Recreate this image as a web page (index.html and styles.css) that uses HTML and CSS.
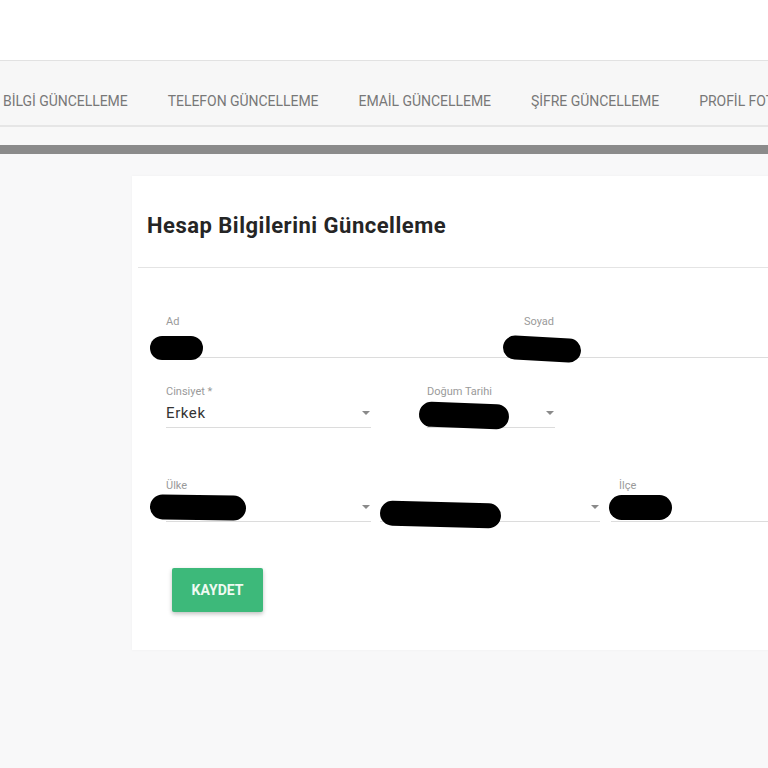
FILE: index.html
```html
<!DOCTYPE html>
<html lang="tr">
<head>
<meta charset="utf-8">
<title>Hesap Bilgilerini Güncelleme</title>
<link rel="stylesheet" href="styles.css">
</head>
<body>
<header class="topbar"></header>
<nav class="tabs">
  <div class="tabs-row">
    <a class="tab">BİLGİ GÜNCELLEME</a>
    <a class="tab">TELEFON GÜNCELLEME</a>
    <a class="tab">EMAİL GÜNCELLEME</a>
    <a class="tab">ŞİFRE GÜNCELLEME</a>
    <a class="tab">PROFİL FOTOĞRAFI</a>
  </div>
</nav>
<div class="strip"></div>
<div class="progress"></div>
<main class="main">
  <section class="card">
    <div class="card-head">
      <h1 class="card-title">Hesap Bilgilerini Güncelleme</h1>
    </div>
    <div class="divider"></div>
    <form class="form">
      <div class="row row-1">
        <div class="field w-half">
          <label class="label">Ad</label>
          <div class="control"><span class="redact r-ad"></span></div>
        </div>
        <div class="field w-half">
          <label class="label">Soyad</label>
          <div class="control"><span class="redact r-soyad"></span></div>
        </div>
      </div>
      <div class="row row-2">
        <div class="field w-select">
          <label class="label">Cinsiyet *</label>
          <div class="control"><span class="value">Erkek</span><span class="caret"></span></div>
        </div>
        <div class="field w-date">
          <label class="label">Doğum Tarihi</label>
          <div class="control"><span class="redact r-dogum"></span><span class="caret"></span></div>
        </div>
      </div>
      <div class="row row-3">
        <div class="field w-select">
          <label class="label">Ülke</label>
          <div class="control"><span class="redact r-ulke"></span><span class="caret"></span></div>
        </div>
        <div class="field w-il">
          <label class="label">&nbsp;</label>
          <div class="control"><span class="redact r-il"></span><span class="caret"></span></div>
        </div>
        <div class="field w-ilce">
          <label class="label label-ilce">İlçe</label>
          <div class="control"><span class="redact r-ilce"></span></div>
        </div>
      </div>
      <div class="actions">
        <button type="button" class="btn">KAYDET</button>
      </div>
    </form>
  </section>
</main>
</body>
</html>
```

FILE: styles.css
```css
html, body {
  margin: 0;
  padding: 0;
}
body {
  background: #f8f8f9;
  font-family: Roboto, "Noto Sans", sans-serif;
  overflow: hidden;
  width: 768px;
  height: 768px;
}
.topbar {
  height: 60px;
  background: #ffffff;
  border-bottom: 1px solid #e2e2e2;
}
.tabs {
  height: 64px;
  background: #f7f7f7;
  border-bottom: 2px solid #e6e6e6;
  overflow: hidden;
}
.tabs-row {
  display: flex;
  height: 100%;
  align-items: center;
  padding-top: 15px;
  box-sizing: border-box;
  margin-left: -17px;
  white-space: nowrap;
}
.tab {
  padding: 0 20px;
  font-size: 14px;
  color: #787878;
  letter-spacing: -0.04px;
  flex: none;
}
.strip {
  height: 18px;
  background: #f8f8f8;
}
.progress {
  height: 9px;
  background: #8b8b8b;
}
.main {
  padding: 22px 0 0 132px;
}
.card {
  width: 1000px;
  height: 474px;
  background: #ffffff;
  box-shadow: 0 0 3px rgba(0,0,0,0.04);
}
.card-head {
  padding: 35px 15px 27px;
}
.card-title {
  margin: 0;
  font-size: 22px;
  line-height: 29px;
  font-weight: 700;
  color: #252525;
  letter-spacing: 0.5px;
}
.divider {
  margin-left: 6px;
  height: 1px;
  background: #e4e4e4;
}
.form {
  padding: 47px 0 0 34px;
}
.row {
  display: flex;
}
.row-1 {
  gap: 16px;
}
.row-2 {
  margin-top: 27px;
  gap: 56px;
}
.row-3 {
  margin-top: 51px;
}
.field {
  display: flex;
  flex-direction: column;
}
.w-half { width: 342px; }
.w-select { width: 205px; }
.w-date { width: 128px; }
.w-il { width: 220px; margin-left: 9px; }
.w-ilce { width: 200px; margin-left: 11px; }
.label {
  font-size: 11px;
  line-height: 14px;
  color: #9a9a9a;
  height: 14px;
}
.label-ilce {
  padding-left: 8px;
}
.control {
  height: 28px;
  border-bottom: 1px solid #dcdcdc;
  display: flex;
  align-items: center;
  justify-content: space-between;
}
.value {
  font-size: 15px;
  color: #333;
  letter-spacing: 0.6px;
}
.caret {
  width: 0;
  height: 0;
  border-left: 4px solid transparent;
  border-right: 4px solid transparent;
  border-top: 4px solid #8a8a8a;
  margin-right: 1px;
  margin-left: auto;
}
.redact {
  display: block;
  background: #000;
  border-radius: 14px;
  flex: none;
}
.r-ad { width: 53px; height: 24px; margin: 10px 0 0 -16px; }
.r-soyad { width: 78px; height: 24px; margin: 12px 0 0 -21px; transform: rotate(3deg); }
.r-dogum { width: 90px; height: 25px; margin: 4px 0 0 -8px; transform: rotate(2deg); }
.r-ulke { width: 96px; height: 25px; margin: 0 0 0 -16px; transform: rotate(1deg); }
.r-il { width: 121px; height: 25px; margin: 14px 0 0 0; transform: rotate(1.5deg); }
.r-ilce { width: 63px; height: 25px; margin: 0 0 0 -2px; }
.actions {
  margin-top: 46px;
  padding-left: 6px;
}
.btn {
  width: 91px;
  height: 44px;
  border: 0;
  border-radius: 2px;
  background: #3db97a;
  color: #effaf2;
  font-family: Roboto, sans-serif;
  font-size: 14px;
  font-weight: 700;
  letter-spacing: 0;
  box-shadow: 0 2px 4px rgba(0,0,0,0.25);
}
```
